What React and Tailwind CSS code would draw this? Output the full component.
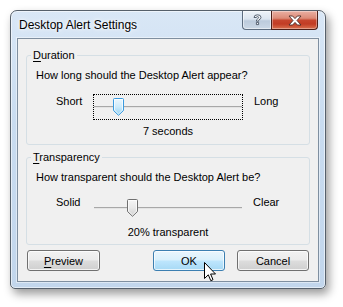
import React from "react";

function Thumb({ blue }) {
  const id = blue ? "tb" : "tg";
  return (
    <svg width="11" height="18" viewBox="0 0 11 18" className="block">
      <defs>
        <linearGradient id={id} x1="0" y1="0" x2="0" y2="1">
          {blue ? (
            <>
              <stop offset="0" stopColor="#eef8fe" />
              <stop offset="0.5" stopColor="#cdebfb" />
              <stop offset="1" stopColor="#8ed0f3" />
            </>
          ) : (
            <>
              <stop offset="0" stopColor="#f6f6f6" />
              <stop offset="0.5" stopColor="#e8e8e8" />
              <stop offset="1" stopColor="#cfcfcf" />
            </>
          )}
        </linearGradient>
      </defs>
      <path
        d="M1.5,0.5 H9.5 Q10.5,0.5 10.5,1.5 V12.5 L5.5,17.3 L0.5,12.5 V1.5 Q0.5,0.5 1.5,0.5 Z"
        fill={`url(#${id})`}
        stroke={blue ? "#3a9be0" : "#707070"}
      />
      <path
        d="M1.5,1.5 H9.5 V12.1 L5.5,16 L1.5,12.1 Z"
        fill="none"
        stroke="#ffffff"
        strokeOpacity="0.7"
      />
    </svg>
  );
}

function Slider({ focused, pos }) {
  return (
    <div
      className={`relative mt-[1px] h-[26px] w-[150px] border border-dotted ${
        focused ? "border-black" : "border-transparent"
      }`}
    >
      <div className="mt-[11px] h-px bg-[#a8a8a8]" />
      <div className="h-px bg-[#e4e4e4]" />
      <div className={`absolute top-[3px] ${pos}`}>
        <Thumb blue={focused} />
      </div>
    </div>
  );
}

function Group({ letter, rest, question, left, right, leftPad, rightPad, value, focused, pos, className }) {
  return (
    <fieldset className={`m-0 rounded-[3px] border border-[#d5dfe5] pb-[4px] pl-[4px] pr-0 ${className}`}>
      <legend className="px-[2px] leading-[16px]">
        <span className="underline underline-offset-[2px]">{letter}</span>
        {rest}
      </legend>
      <div className="ml-[5px] mt-[4px] leading-[16px]">{question}</div>
      <div className={`grid grid-cols-[37px_150px_auto] ${leftPad}`}>
        <div className="leading-[16px]">{left}</div>
        <Slider focused={focused} pos={pos} />
        <div className={`leading-[16px] ${rightPad}`}>{right}</div>
        <div className="col-start-2 mt-[3px] whitespace-nowrap text-center leading-[16px]">{value}</div>
      </div>
    </fieldset>
  );
}

const btnGray =
  "flex h-[21px] items-center justify-center rounded-[3px] border border-[#707070] bg-[linear-gradient(to_bottom,#f2f2f2_0%,#ebebeb_48%,#dddddd_52%,#cfcfcf_100%)] shadow-[inset_0_0_0_1px_rgba(255,255,255,0.75)] leading-[16px]";
const btnBlue =
  "flex h-[21px] items-center justify-center rounded-[3px] border border-[#3c7fb1] bg-[linear-gradient(to_bottom,#eaf6fd_0%,#d9f0fc_48%,#bee6fd_52%,#a7d9f5_100%)] shadow-[inset_0_0_0_1px_rgba(255,255,255,0.7)] leading-[16px]";

export default function App() {
  return (
    <div className="h-[307px] w-[343px] bg-white pl-[10px] pt-[10px] font-['Liberation_Sans',Arial,sans-serif] text-[11px] text-black">
      <div className="flex h-[279px] w-[316px] flex-col rounded-b-[5px] rounded-t-[7px] border border-[#56606b] bg-[linear-gradient(to_bottom,#d9e7f6_0%,#c9dcf0_40%,#c2d6ec_100%)] shadow-[inset_0_0_0_1px_rgba(255,255,255,0.55),3px_5px_10px_rgba(0,0,0,0.4)]">
        <div className="flex h-[27px] items-start justify-between">
          <div className="pl-[8px] pt-[6px] text-[12px] leading-[16px] text-black [text-shadow:0_0_6px_#ffffff,0_0_3px_#ffffff]">
            Desktop Alert Settings
          </div>
          <div className="mr-[7px] flex">
            <div className="flex h-[19px] w-[29px] items-center justify-center rounded-bl-[4px] border-b border-l border-[#5d6d80] bg-[linear-gradient(to_bottom,#eef3f9_0%,#dbe5f0_45%,#bccbdc_55%,#cbd8e6_100%)] shadow-[inset_0_0_0_1px_rgba(255,255,255,0.5)]">
              <svg width="9" height="12" viewBox="0 0 9 12">
                <path
                  d="M1,3.5 Q1,0.8 4.5,0.8 Q8,0.8 8,3.4 Q8,5 6,5.8 Q5.6,6 5.6,7.2 H3.4 Q3.4,5.4 4.6,4.8 Q5.6,4.3 5.6,3.5 Q5.6,2.6 4.5,2.6 Q3.4,2.6 3.4,3.5 Z M3.4,8.4 H5.6 V10.6 H3.4 Z"
                  fill="#f4f6f9"
                  stroke="#4a5666"
                  strokeWidth="0.9"
                  strokeLinejoin="round"
                />
              </svg>
            </div>
            <div className="flex h-[19px] w-[47px] items-center justify-center rounded-br-[4px] border-b border-l border-r border-[#4c1f18] bg-[linear-gradient(to_bottom,#eab0a3_0%,#dc8b78_40%,#c6452d_52%,#c23c24_72%,#d9704f_100%)] shadow-[inset_0_0_0_1px_rgba(255,255,255,0.35)]">
              <svg width="14" height="11" viewBox="0 0 14 11">
                <path
                  d="M1,1 H4.6 L7,3.6 L9.4,1 H13 L9,5.5 L13,10 H9.4 L7,7.4 L4.6,10 H1 L5,5.5 Z"
                  fill="#ffffff"
                  stroke="#4a2a26"
                  strokeWidth="0.9"
                  strokeLinejoin="round"
                />
              </svg>
            </div>
          </div>
        </div>
        <div className="mx-[6px] mb-[6px] flex flex-1 flex-col border border-[#7f8fa0] bg-[#f0f0f0] px-[8px] pt-[8px] shadow-[0_0_0_1px_rgba(255,255,255,0.45)]">
          <Group
            letter="D"
            rest="uration"
            question="How long should the Desktop Alert appear?"
            left="Short"
            right="Long"
            leftPad="ml-[25px] mt-[10px]"
            rightPad="pl-[11px]"
            value="7 seconds"
            focused
            pos="left-[19px]"
            className="pb-[5px]"
          />
          <Group
            letter="T"
            rest="ransparency"
            question="How transparent should the Desktop Alert be?"
            left="Solid"
            right="Clear"
            leftPad="ml-[25px] mt-[9px]"
            rightPad="pl-[10px]"
            value="20% transparent"
            pos="left-[33px]"
            className="mt-[4px]"
          />
          <div className="mt-[5px] flex justify-between px-[1px]">
            <div className={`${btnGray} w-[73px]`}>
              <span>
                <span className="underline underline-offset-[2px]">P</span>review
              </span>
            </div>
            <div className="flex gap-[12px]">
              <div className={`${btnBlue} relative w-[72px]`}>
                OK
                <svg
                  width="12"
                  height="20"
                  viewBox="0 0 12 20"
                  className="absolute left-[50px] top-[11px]"
                >
                  <path
                    d="M0.5,0.5 L0.5,16.5 L4.3,12.8 L6.8,18.7 L9,17.7 L6.6,12 L11.5,12 Z"
                    fill="#ffffff"
                    stroke="#000000"
                    strokeLinejoin="miter"
                  />
                </svg>
              </div>
              <div className={`${btnGray} w-[72px]`}>Cancel</div>
            </div>
          </div>
        </div>
      </div>
    </div>
  );
}
